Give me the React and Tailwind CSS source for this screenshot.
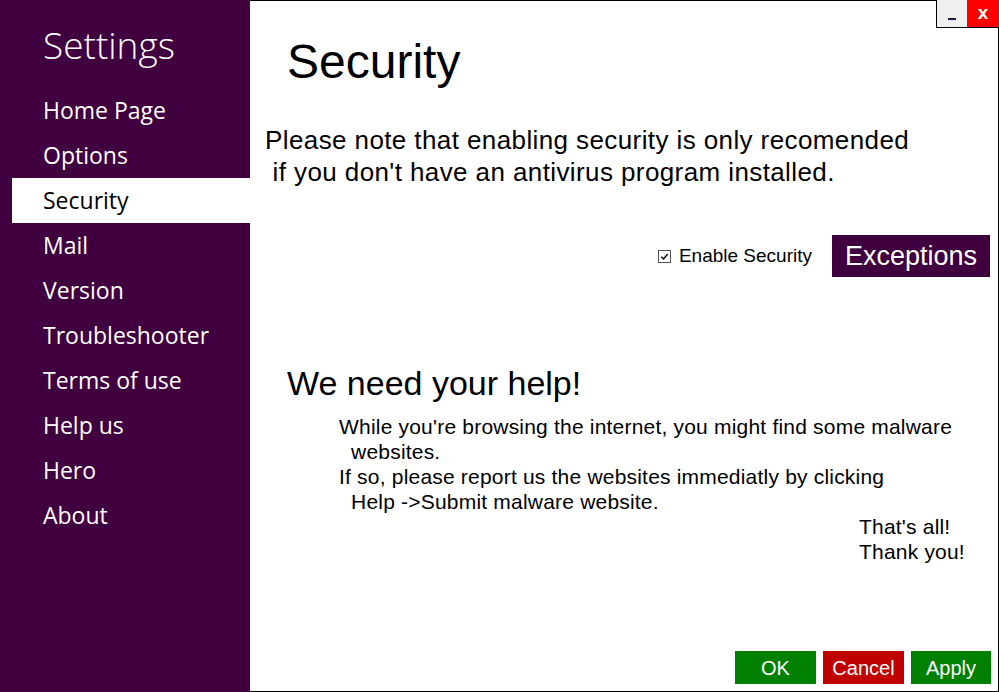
const menu = ['Home Page', 'Options', 'Security', 'Mail', 'Version', 'Troubleshooter', 'Terms of use', 'Help us', 'Hero', 'About'];

export default function App() {
  const active = 'Security';
  return (
    <div className="w-[999px] h-[692px] flex bg-white overflow-hidden">
      <aside className="w-[250px] h-full bg-[#400040] text-white font-['Open_Sans',sans-serif]">
        <h1 className="mt-[26px] ml-[43px] text-[37px] leading-none font-light">Settings</h1>
        <ul className="mt-[25px]">
          {menu.map(m => (
            <li
              key={m}
              className={`ml-[12px] pl-[31px] h-[45px] flex items-center text-[23px] ${m === active ? 'bg-white text-black' : ''}`}
            >
              {m}
            </li>
          ))}
        </ul>
      </aside>

      <main className="relative flex-1 h-full flex flex-col border-t border-r border-b border-black font-['Liberation_Sans',Arial,sans-serif] text-black">
        <div className="absolute -top-px -right-px flex h-[28px] border-l border-b border-black">
          <button className="w-[30px] h-full bg-[#f0f0f0] flex items-end justify-center pb-[7px]">
            <span className="block w-[8px] h-[2px] bg-[#1a1a40]" />
          </button>
          <button className="w-[32px] h-full bg-[#ff0000] text-white font-bold text-[19px] leading-none flex items-center justify-center pb-[2px]">
            x
          </button>
        </div>

        <h2 className="mt-[37px] ml-[37px] text-[48px] leading-none">Security</h2>

        <p className="mt-[38px] ml-[15px] text-[26px] leading-[32px] tracking-[0.4px] whitespace-pre">
          {'Please note that enabling security is only recomended\n if you don\'t have an antivirus program installed.'}
        </p>

        <div className="mt-[47px] mr-[8px] flex items-center justify-end">
          <label className="flex items-center text-[19px]">
            <span className="w-[13px] h-[13px] border border-[#555] bg-white flex items-center justify-center mr-[8px]">
              <svg viewBox="0 0 10 10" className="w-[9px] h-[9px]">
                <path d="M1.5 5.2 L4 7.6 L8.6 2.2" fill="none" stroke="#111" strokeWidth="1.6" />
              </svg>
            </span>
            Enable Security
          </label>
          <button className="ml-[20px] w-[158px] h-[42px] bg-[#400040] text-white text-[27px] leading-none">
            Exceptions
          </button>
        </div>

        <h3 className="mt-[89px] ml-[37px] text-[34px] leading-none">We need your help!</h3>

        <p className="mt-[14px] ml-[89px] text-[21px] leading-[25px] tracking-[0.2px] whitespace-pre">
          {"While you're browsing the internet, you might find some malware\n  websites.\nIf so, please report us the websites immediatly by clicking\n  Help ->Submit malware website."}
        </p>
        <p className="ml-[609px] text-[21px] leading-[25px] tracking-[0.2px] whitespace-pre">
          {"That's all!\nThank you!"}
        </p>

        <div className="mt-auto mr-[7px] mb-[7px] flex justify-end gap-[7px] text-white text-[20px]">
          <button className="w-[81px] h-[33px] bg-[#008000]">OK</button>
          <button className="w-[81px] h-[33px] bg-[#c00000]">Cancel</button>
          <button className="w-[80px] h-[33px] bg-[#008000]">Apply</button>
        </div>
      </main>
    </div>
  );
}
